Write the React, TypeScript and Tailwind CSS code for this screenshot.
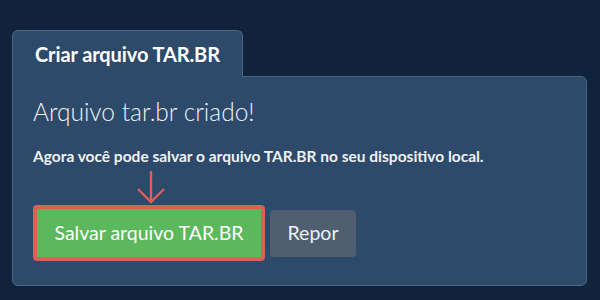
import React from "react";

export default function App() {
  return (
    <div
      className="w-[600px] h-[300px] bg-[#10233a] pt-[30px] pl-[12px]"
      style={{ fontFamily: "Lato, 'Open Sans', sans-serif" }}
    >
      <div className="w-[575px] flex flex-col">
        <div className="relative z-10 -mb-px w-[231px] h-[47px] bg-[#2d4a6a] border border-b-0 border-[#4a6587] rounded-t-[6px] flex items-center pl-[22px]">
          <span className="text-[20px] font-bold text-white leading-none tracking-[-0.1px]">Criar arquivo TAR.BR</span>
        </div>
        <div className="h-[210px] bg-[#2d4a6a] border border-[#4a6587] rounded-tr-[6px] rounded-b-[6px] pl-[20px] pt-[18px]">
          <div className="text-[24.5px] font-light text-[#eef1f4] leading-[34px]">Arquivo tar.br criado!</div>
          <div className="mt-[16px] text-[15.5px] font-bold text-[#eef1f4] leading-[22px]">
            Agora você pode salvar o arquivo TAR.BR no seu dispositivo local.
          </div>
          <div className="ml-[102px] mt-[2px] h-[36px] w-[32px]">
            <svg width="32" height="36" viewBox="0 0 32 36">
              <path d="M16 2 V33 M3 20 L16 33 L29 20" fill="none" stroke="#dd5f58" strokeWidth="2.4" />
            </svg>
          </div>
          <div className="flex items-center gap-[5px]">
            <div className="border-[4px] border-[#dd5f58] rounded-[4px]">
              <button className="h-[48px] w-[224px] bg-[#5cb85c] text-white text-[19.5px] leading-none flex items-center justify-center">
                Salvar arquivo TAR.BR
              </button>
            </div>
            <button className="h-[47px] w-[86px] bg-[#4f5f70] text-[#eef1f4] text-[19.5px] leading-none rounded-[4px] flex items-center justify-center">
              Repor
            </button>
          </div>
        </div>
      </div>
    </div>
  );
}
